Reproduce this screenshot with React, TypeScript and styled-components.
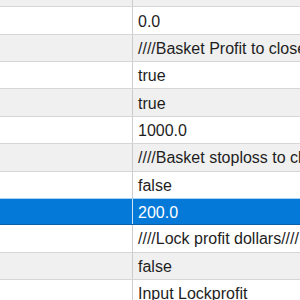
import styled, { createGlobalStyle } from 'styled-components';

const GlobalStyle = createGlobalStyle`
  html, body {
    margin: 0;
    padding: 0;
    background: #ffffff;
    overflow: hidden;
  }
`;

const Grid = styled.div`
  width: 300px;
  margin-top: -20px;
  font-family: "Liberation Sans", Arial, sans-serif;
  font-size: 16px;
  color: #1e1e1e;
`;

const Row = styled.div<{ $shade: 'white' | 'gray' | 'selected' }>`
  display: grid;
  grid-template-columns: 133px 1fr;
  height: 27.37px;
  box-sizing: border-box;
  border-bottom: 1px solid
    ${(p) => (p.$shade === 'selected' ? '#0a5fa8' : '#d6d6d6')};
  border-top: ${(p) => (p.$shade === 'selected' ? '1px solid #a8d2f2' : 'none')};
  margin-top: ${(p) => (p.$shade === 'selected' ? '-1px' : '0')};
  background: ${(p) =>
    p.$shade === 'selected' ? '#0479d8' : p.$shade === 'gray' ? '#f0f0f0' : '#ffffff'};
  color: ${(p) => (p.$shade === 'selected' ? '#ffffff' : '#1e1e1e')};
`;

const NameCell = styled.div<{ $selected?: boolean }>`
  border-right: 1px solid ${(p) => (p.$selected ? '#cfe4f7' : '#cccccc')};
`;

const ValueCell = styled.div`
  display: flex;
  align-items: center;
  padding: 2px 0 0 5px;
  white-space: nowrap;
  overflow: hidden;
`;

type Item = { value: string; shade: 'white' | 'gray' | 'selected' };

const items: Item[] = [
  { value: '0.0', shade: 'gray' },
  { value: '0.0', shade: 'white' },
  { value: '////Basket Profit to close', shade: 'gray' },
  { value: 'true', shade: 'white' },
  { value: 'true', shade: 'gray' },
  { value: '1000.0', shade: 'white' },
  { value: '////Basket stoploss to close', shade: 'gray' },
  { value: 'false', shade: 'white' },
  { value: '200.0', shade: 'selected' },
  { value: '////Lock profit dollars////', shade: 'white' },
  { value: 'false', shade: 'gray' },
  { value: 'Input Lockprofit', shade: 'white' },
];

const App = () => {
  return (
    <>
      <GlobalStyle />
      <Grid>
        {items.map((item, i) => (
          <Row key={i} $shade={item.shade}>
            <NameCell $selected={item.shade === 'selected'} />
            <ValueCell>{item.value}</ValueCell>
          </Row>
        ))}
      </Grid>
    </>
  );
};

export default App;
